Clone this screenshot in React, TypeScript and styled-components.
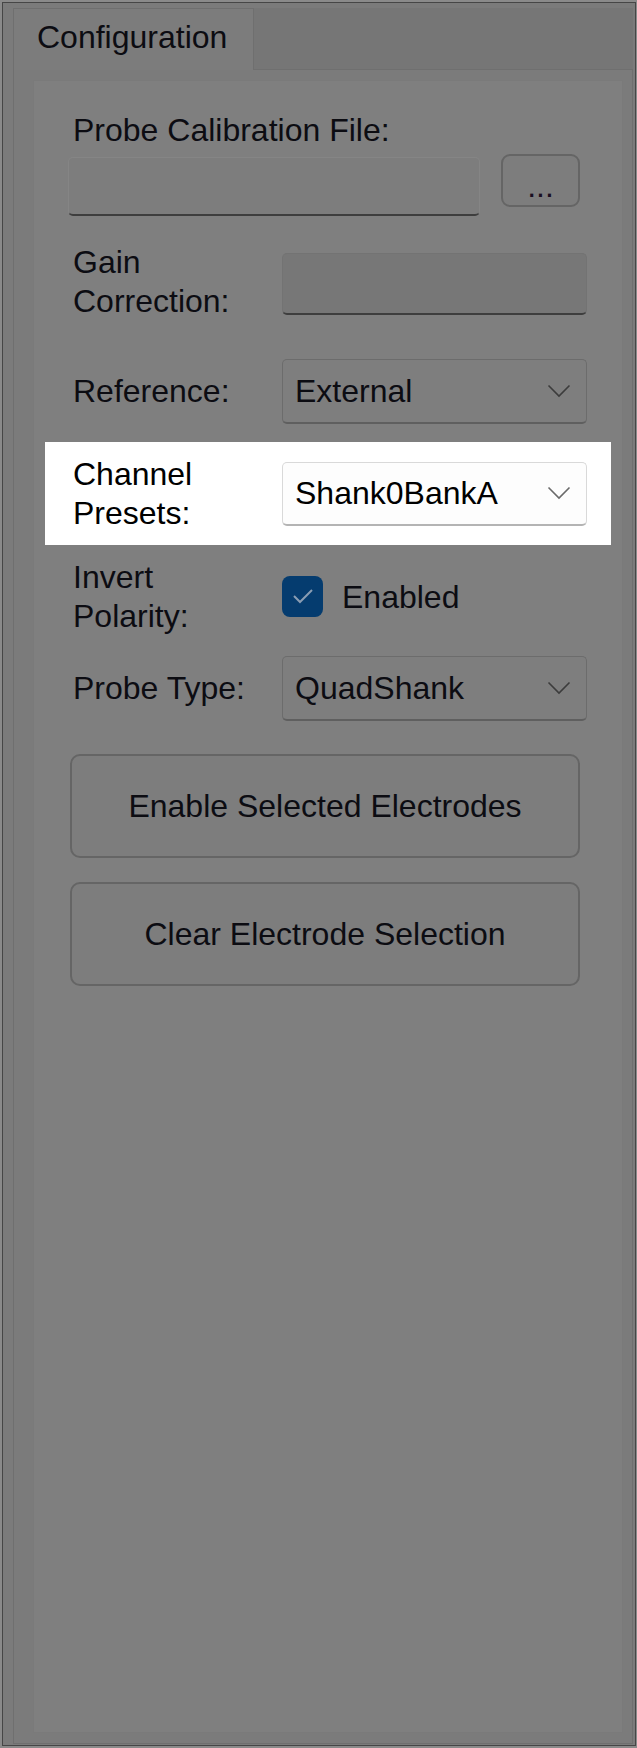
import styled, { createGlobalStyle } from 'styled-components';

const GlobalStyle = createGlobalStyle`
  html, body {
    margin:0;
    padding:0;
    background:#8a8a8a;
  }
  body {
    font-family:"Liberation Sans", Arial, sans-serif;
    color:#0c0c12;
  }
  * { box-sizing:border-box; }
`

const Window = styled.div`
  width:637px;
  height:1748px;
  padding:2px 1px 2px 2px;
  background:#8a8a8a;
`
const Frame = styled.div`
  height:100%;
  border:1px solid #464646;
  background:#7b7b7b;
  padding:5px 2px 1px 10px;
  display:flex;
  flex-direction:column;
`
const TabStrip = styled.div`
  display:flex;
  height:62px;
  flex-shrink:0;
`
const Tab = styled.div`
  width:241px;
  background:#7c7c7c;
  border:1px solid #6f6f6f;
  border-bottom:none;
  display:flex;
  align-items:center;
  padding:0 0 4px 23px;
  font-size:32px;
`
const TabFiller = styled.div`
  flex:1;
  background:#767676;
  border-bottom:1px solid #6f6f6f;
`
const TabPage = styled.div`
  flex:1;
  background:#7b7b7b;
  border:1px solid #6f6f6f;
  border-top:none;
  padding:10px 9px 10px 19px;
  display:flex;
`
const Panel = styled.div`
  flex:1;
  background:#7f7f7f;
  border:1px solid #7a7a7a;
  display:flex;
  flex-direction:column;
`
const Row = styled.div<{ $top: number; $height: number; $align?: string }>`
  display:flex;
  align-items:${p => p.$align || 'center'};
  margin-top:${p => p.$top}px;
  height:${p => p.$height}px;
  flex-shrink:0;
`
const Highlight = styled.div`
  display:flex;
  align-items:center;
  margin:18px 0 0 11px;
  width:566px;
  height:103px;
  padding:0 0 0 28px;
  background:#ffffff;
  color:#000;
  flex-shrink:0;
`
const Label = styled.div<{ $indent?: number }>`
  font-size:32px;
  line-height:39px;
  width:209px;
  margin-left:${p => p.$indent ?? 39}px;
  flex-shrink:0;
  white-space:nowrap;
`
const TextBox = styled.div<{ $width: number; $height: number; $disabled?: boolean }>`
  width:${p => p.$width}px;
  height:${p => p.$height}px;
  background:${p => p.$disabled ? '#777777' : '#7d7d7d'};
  border:1px solid ${p => p.$disabled ? '#737373' : '#858585'};
  border-bottom:2px solid #3e3e3e;
  border-radius:5px;
`
const FileBox = styled(TextBox)`
  margin:3px 0 0 34px;
`
const GainBox = styled(TextBox)`
  margin-top:10px;
`
const SmallButton = styled.div`
  width:79px;
  height:53px;
  margin-left:21px;
  border:2px solid #656565;
  border-radius:9px;
  background:#7d7d7d;
  display:flex;
  align-items:center;
  justify-content:center;
  font-size:32px;
  padding-top:12px;
  color:#1a0f22;
`
const Combo = styled.div<{ $light?: boolean }>`
  width:305px;
  height:${p => p.$light ? 64 : 65}px;
  display:flex;
  align-items:center;
  justify-content:space-between;
  padding:0 15px 0 12px;
  font-size:32px;
  border-radius:5px;
  background:${p => p.$light ? '#fdfdfd' : '#7e7e7e'};
  border:1px solid ${p => p.$light ? '#d9d9d9' : '#6c6c6c'};
  border-bottom:2px solid ${p => p.$light ? '#b4b4b4' : '#5f5f5f'};
  color:${p => p.$light ? '#000' : '#0c0c12'};
`
const Chevron = styled.svg<{ $light?: boolean }>`
  width:24px;
  height:14px;
  stroke:${p => p.$light ? '#6a6a6a' : '#3c3c3c'};
`
const CheckBox = styled.div`
  width:41px;
  height:41px;
  border-radius:8px;
  background:#053c6f;
  display:flex;
  align-items:center;
  justify-content:center;
  margin-top:-2px;
`
const CheckText = styled.span`
  font-size:32px;
  margin-left:19px;
`
const BigButton = styled.div<{ $top: number }>`
  margin:${p => p.$top}px 0 0 36px;
  width:510px;
  height:104px;
  flex-shrink:0;
  border:2px solid #656565;
  border-radius:10px;
  background:#7d7d7d;
  display:flex;
  align-items:center;
  justify-content:center;
  font-size:32px;
`

function ComboBox({ value, light }: { value: string, light?: boolean }) {
  return (
    <Combo $light={light}>
      <span>{value}</span>
      <Chevron $light={light} viewBox="0 0 24 14" fill="none">
        <polyline points="1.5,1.5 12,12 22.5,1.5" strokeWidth="1.6" />
      </Chevron>
    </Combo>
  )
}

export default function App() {
  return (
    <>
      <GlobalStyle />
      <Window>
        <Frame>
          <TabStrip>
            <Tab>Configuration</Tab>
            <TabFiller />
          </TabStrip>
          <TabPage>
            <Panel>
              <Row $top={31} $height={36}>
                <Label>Probe Calibration File:</Label>
              </Row>
              <Row $top={6} $height={62} $align="flex-start">
                <FileBox $width={412} $height={59} />
                <SmallButton>...</SmallButton>
              </Row>
              <Row $top={27} $height={80} $align="flex-start">
                <Label>Gain<br />Correction:</Label>
                <GainBox $width={305} $height={62} $disabled />
              </Row>
              <Row $top={36} $height={65}>
                <Label>Reference:</Label>
                <ComboBox value="External" />
              </Row>
              <Highlight>
                <Label $indent={0}>Channel<br />Presets:</Label>
                <ComboBox value="Shank0BankA" light />
              </Highlight>
              <Row $top={13} $height={78}>
                <Label>Invert<br />Polarity:</Label>
                <CheckBox>
                  <svg width="22" height="16" viewBox="0 0 22 16" fill="none">
                    <polyline points="2,8 8,14 20,2" stroke="#8a9db3" strokeWidth="2" />
                  </svg>
                </CheckBox>
                <CheckText>Enabled</CheckText>
              </Row>
              <Row $top={21} $height={63}>
                <Label>Probe Type:</Label>
                <ComboBox value="QuadShank" />
              </Row>
              <BigButton $top={34}>Enable Selected Electrodes</BigButton>
              <BigButton $top={24}>Clear Electrode Selection</BigButton>
            </Panel>
          </TabPage>
        </Frame>
      </Window>
    </>
  )
}
